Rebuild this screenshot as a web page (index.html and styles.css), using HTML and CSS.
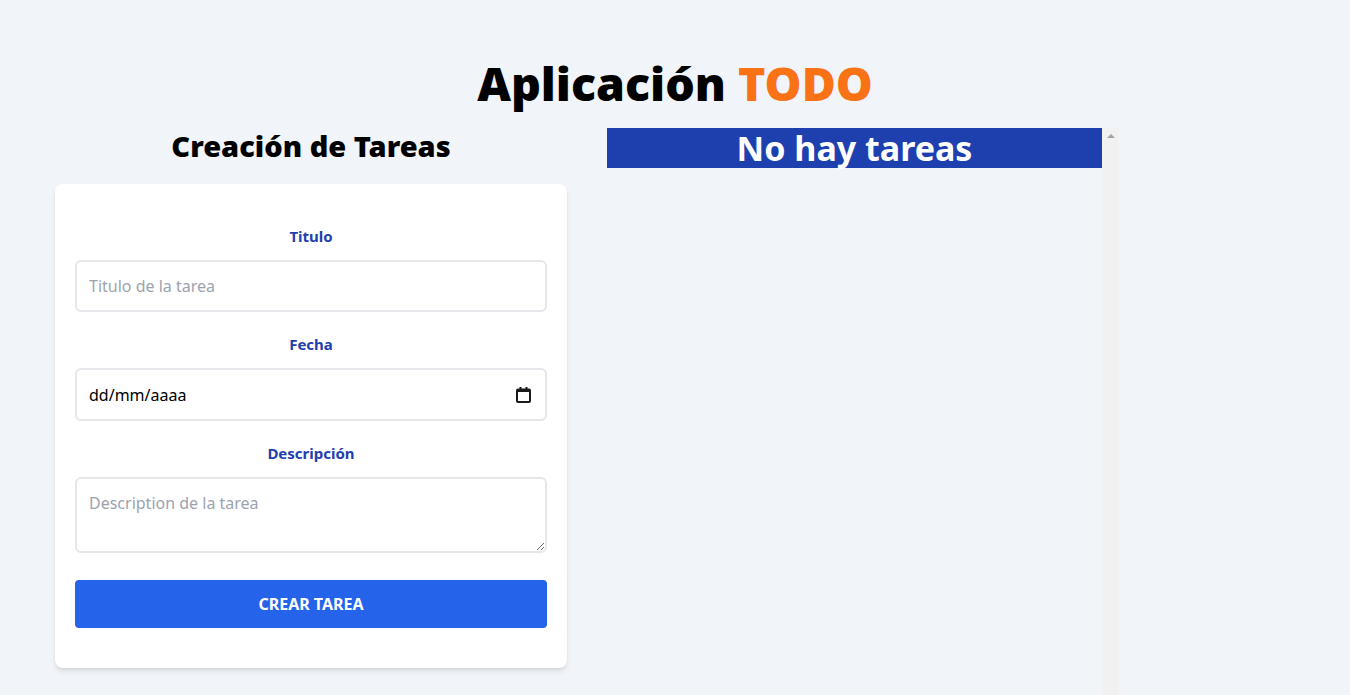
FILE: index.html
```html
<!DOCTYPE html>
<html lang="es">
<head>
<meta charset="utf-8">
<title>Aplicación TODO</title>
<link rel="stylesheet" href="styles.css">
</head>
<body>
<div class="container">
  <h1 class="title">Aplicación <span class="accent">TODO</span></h1>
  <div class="columns">
    <section class="col">
      <h2 class="col-title">Creación de Tareas</h2>
      <form class="card">
        <div class="field">
          <label class="label" for="titulo">Titulo</label>
          <input class="input" id="titulo" type="text" placeholder="Titulo de la tarea">
        </div>
        <div class="field">
          <label class="label" for="fecha">Fecha</label>
          <div class="input date" id="fecha">
            <span>dd/mm/aaaa</span>
            <svg class="cal" width="15" height="16" viewBox="0 0 15 16" aria-hidden="true">
              <rect x="1" y="2.5" width="13" height="12.5" rx="1" fill="none" stroke="#1a1a1a" stroke-width="2"/>
              <rect x="1" y="2" width="13" height="3" fill="#1a1a1a"/>
              <rect x="3.5" y="0" width="2" height="3" fill="#1a1a1a"/>
              <rect x="9.5" y="0" width="2" height="3" fill="#1a1a1a"/>
            </svg>
          </div>
        </div>
        <div class="field">
          <label class="label" for="desc">Descripción</label>
          <textarea class="input textarea" id="desc" rows="2" placeholder="Description de la tarea"></textarea>
        </div>
        <button class="btn" type="button">Crear Tarea</button>
      </form>
    </section>
    <section class="col tasks">
      <div class="task-list">
        <h2 class="empty">No hay tareas</h2>
      </div>
      <div class="scrollbar" aria-hidden="true"><span class="arrow-up"></span></div>
    </section>
  </div>
</div>
</body>
</html>
```

FILE: styles.css
```css
html { overflow: hidden; }
body {
  margin: 0;
  background: #f1f4f9;
  font-family: "Noto Sans", "Open Sans", sans-serif;
  line-height: 1.5;
  color: #000;
}
.container {
  max-width: 1280px;
  margin: 0 auto;
}
.title {
  margin: 59px 0 0;
  text-align: center;
  font-size: 46.5px;
  line-height: 48px;
  height: 48px;
  font-weight: 900;
}
.accent { color: #f97316; }
.columns {
  display: flex;
  margin-top: 21px;
}
.col {
  width: 512px;
  margin: 0 20px;
  flex: none;
}
.col-title {
  margin: 0;
  text-align: center;
  font-size: 29px;
  line-height: 36px;
  font-weight: 900;
}
.card {
  margin-top: 20px;
  background: #fff;
  border-radius: 8px;
  box-shadow: 0 4px 6px -1px rgba(0,0,0,.1), 0 2px 4px -2px rgba(0,0,0,.1);
  padding: 40px 20px;
}
.field { margin-bottom: 20px; }
.label {
  display: block;
  text-align: center;
  color: #1e40af;
  font-weight: 700;
  font-size: 15px;
  line-height: 24px;
  margin: 0 0 12px;
}
.input {
  display: block;
  box-sizing: border-box;
  width: 100%;
  height: 52px;
  border: 2px solid #e5e7eb;
  border-radius: 6px;
  padding: 12px;
  font: inherit;
  font-size: 16px;
  line-height: 24px;
  background: #fff;
  color: #000;
  outline: none;
}
.input::placeholder { color: #9ca3af; }
.date {
  display: flex;
  align-items: center;
  justify-content: space-between;
  height: 53px;
}
.cal { margin-right: 2px; }
.textarea {
  height: 76px;
  resize: vertical;
  margin-bottom: 27px;
}
.btn {
  display: block;
  width: 100%;
  height: 48px;
  border: 0;
  border-radius: 4px;
  background: #2563eb;
  color: #fff;
  font: inherit;
  font-size: 16px;
  font-weight: 700;
  text-transform: uppercase;
}
.tasks {
  height: 695px;
  display: flex;
}
.task-list {
  flex: 1;
  min-width: 0;
}
.scrollbar {
  width: 17px;
  flex: none;
  background: #f1f1f1;
  display: flex;
  justify-content: center;
  padding-top: 6px;
  box-sizing: border-box;
}
.arrow-up {
  width: 0;
  height: 0;
  border-left: 4px solid transparent;
  border-right: 4px solid transparent;
  border-bottom: 4px solid #a3a3a3;
}
.empty {
  margin: 0;
  background: #1e40af;
  color: #fff;
  text-align: center;
  font-size: 34px;
  line-height: 40px;
  height: 40px;
  font-weight: 700;
}
```
